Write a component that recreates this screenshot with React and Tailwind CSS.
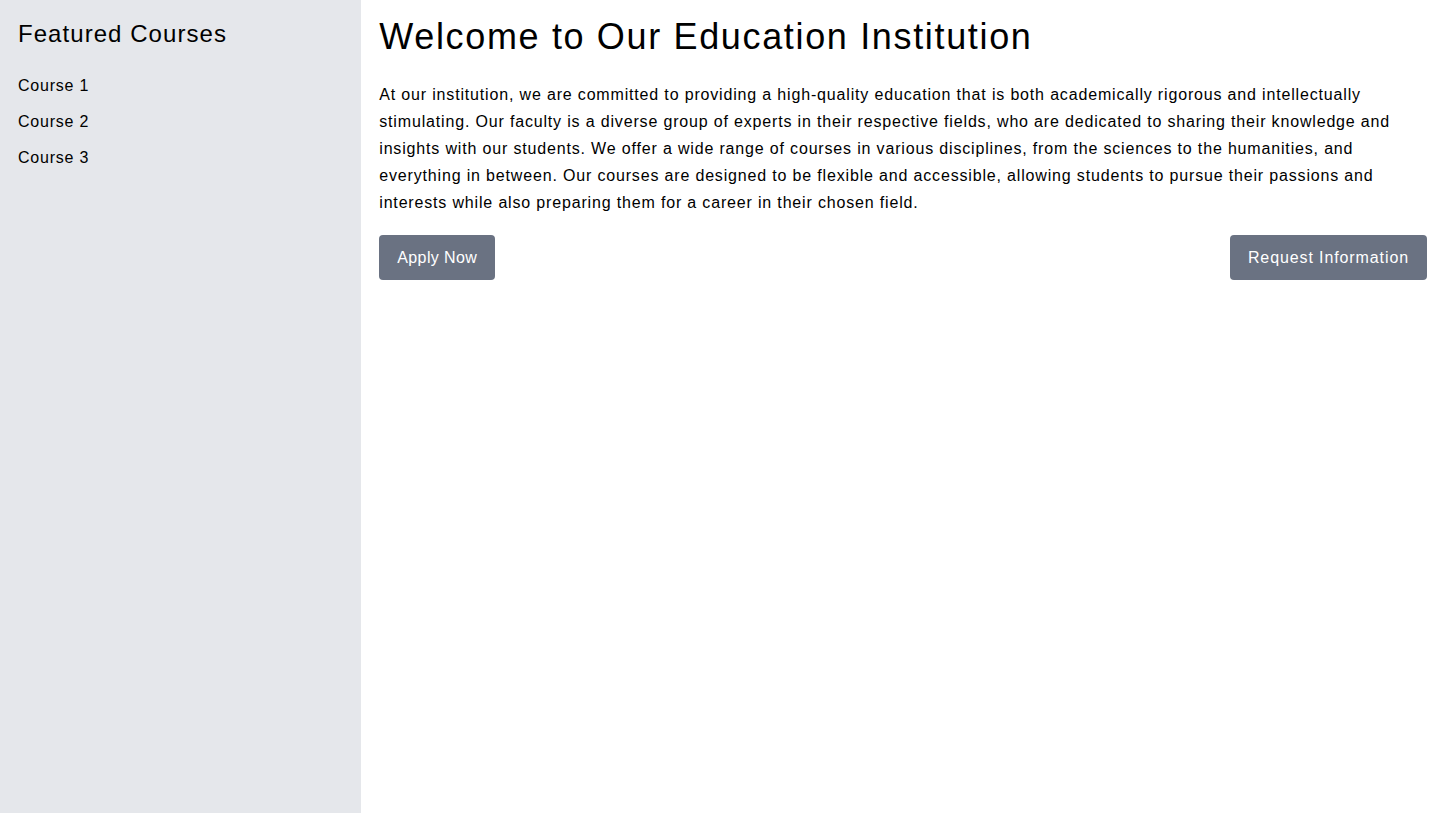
export default function App() {
  return (
    <div
      className="flex min-h-screen text-black"
      style={{ fontFamily: '"Liberation Sans", Arial, sans-serif' }}
    >
      <aside className="w-1/4 shrink-0 bg-gray-200 p-[18px]">
        <h2 className="text-2xl leading-8 tracking-[0.044em] mb-[18px]">Featured Courses</h2>
        <ul className="flex flex-col">
          <li className="text-base leading-9 tracking-[0.048em]">Course 1</li>
          <li className="text-base leading-9 tracking-[0.048em]">Course 2</li>
          <li className="text-base leading-9 tracking-[0.048em]">Course 3</li>
        </ul>
      </aside>
      <main className="w-3/4 p-[18px] pt-[17px]">
        <h1 className="text-4xl leading-10 tracking-[0.046em] mb-6">Welcome to Our Education Institution</h1>
        <p className="text-base leading-[27px] tracking-[0.052em] mb-[19px]">
          At our institution, we are committed to providing a high-quality education that is both academically rigorous and intellectually stimulating. Our faculty is a diverse group of experts in their respective fields, who are dedicated to sharing their knowledge and insights with our students. We offer a wide range of courses in various disciplines, from the sciences to the humanities, and everything in between. Our courses are designed to be flexible and accessible, allowing students to pursue their passions and interests while also preparing them for a career in their chosen field.
        </p>
        <div className="flex justify-between">
          <button className="flex h-[45px] items-center rounded bg-gray-500 px-[18px] text-base tracking-[0.025em] text-white">Apply Now</button>
          <button className="flex h-[45px] items-center rounded bg-gray-500 px-[18px] text-base tracking-[0.056em] text-white">Request Information</button>
        </div>
      </main>
    </div>
  );
}
